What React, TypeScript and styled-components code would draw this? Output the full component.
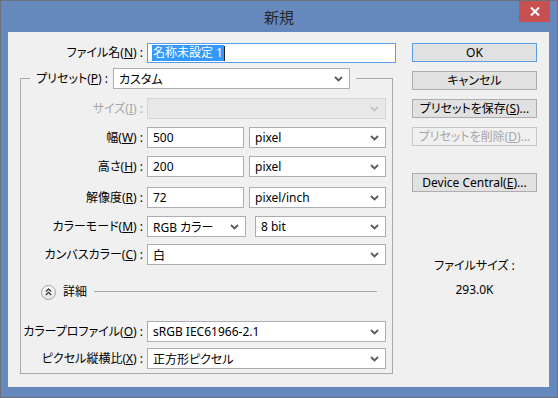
import React from "react"
import styled, { createGlobalStyle } from "styled-components"

const GlobalStyle = createGlobalStyle`
  html, body {
    margin: 0;
    padding: 0;
    background: #6689bd;
  }
  body {
    font-family: "Noto Sans", "Noto Sans CJK JP", sans-serif;
    font-size: 12px;
    color: #000;
    font-feature-settings: "palt";
  }
`

const Window = styled.div`
  position: relative;
  width: 558px;
  height: 398px;
  box-sizing: border-box;
  border: 1px solid #6a717c;
  background: #6689bd;
  display: flex;
  flex-direction: column;
`

const TitleBar = styled.div`
  height: 31px;
  display: flex;
  align-items: center;
  justify-content: center;
  font-family: "Noto Sans CJK JP", sans-serif;
  font-size: 15px;
  color: #262626;
`

const CloseButton = styled.div`
  position: absolute;
  top: 0;
  right: 7px;
  width: 31px;
  height: 21px;
  background: #c75050;
  display: flex;
  align-items: center;
  justify-content: center;
`

const Content = styled.div`
  flex: 1;
  margin: 0 8px 10px 7px;
  background: #f0f0f0;
  display: flex;
  padding-top: 11px;
`

const LeftColumn = styled.div`
  width: 388px;
  display: flex;
  flex-direction: column;
`

const RightColumn = styled.div`
  width: 125px;
  margin-left: 16px;
  display: flex;
  flex-direction: column;
`

const Row = styled.div<{ $top?: number }>`
  display: flex;
  align-items: center;
  margin-top: ${(p) => p.$top ?? 0}px;
`

const Label = styled.div<{ $width: number; $disabled?: boolean }>`
  width: ${(p) => p.$width}px;
  margin-right: 4px;
  text-align: right;
  white-space: nowrap;
  color: ${(p) => (p.$disabled ? "#a6a6a6" : "#000")};
  line-height: 16px;
`

const TextBox = styled.div<{ $width: number; $focused?: boolean }>`
  width: ${(p) => p.$width}px;
  height: ${(p) => (p.$focused ? 20 : 21)}px;
  box-sizing: border-box;
  border: 1px solid ${(p) => (p.$focused ? "#5a9de0" : "#abadb3")};
  background: #fff;
  display: flex;
  align-items: center;
  padding-left: ${(p) => (p.$focused ? 4 : 5)}px;
  font-size: 12px;
  white-space: nowrap;
`

const Selected = styled.span`
  background: #3399ff;
  color: #fff;
  line-height: 16px;
  padding: 0 1px;
`

const Caret = styled.span`
  display: inline-block;
  width: 1px;
  height: 15px;
  background: #222;
`

const Dropdown = styled.div<{ $width: number; $disabled?: boolean; $gap?: number }>`
  width: ${(p) => p.$width}px;
  height: 21px;
  margin-left: ${(p) => p.$gap ?? 0}px;
  box-sizing: border-box;
  border: 1px solid ${(p) => (p.$disabled ? "#d5d5d5" : "#abadb3")};
  background: ${(p) => (p.$disabled ? "#e8e8e8" : "#fff")};
  display: flex;
  align-items: center;
  justify-content: space-between;
  padding: 0 6px 0 5px;
  font-size: 12px;
  white-space: nowrap;
  color: ${(p) => (p.$disabled ? "#bfbfbf" : "#000")};
`

const Group = styled.fieldset`
  margin: 5px 0 0 12px;
  width: 373px;
  box-sizing: border-box;
  border: 1px solid #a8a8a8;
  padding: 9px 6px 4px 0;
  min-width: 0;
`

const Legend = styled.legend`
  margin-left: 9px;
  padding: 0 6px 0 0;
`

const LegendInner = styled.div`
  display: flex;
  align-items: center;
`

const DetailRow = styled.div`
  display: flex;
  align-items: center;
  height: 16px;
  margin-top: 19px;
`

const ToggleCircle = styled.div`
  width: 15px;
  height: 15px;
  margin-left: 20px;
  box-sizing: border-box;
  border-radius: 50%;
  border: 1px solid #a0a0a0;
  background: linear-gradient(#ffffff, #e6e6e6);
  display: flex;
  align-items: center;
  justify-content: center;
`

const DetailText = styled.span`
  margin-left: 7px;
  line-height: 16px;
`

const DetailLine = styled.div`
  flex: 1;
  height: 0;
  border-top: 1px solid #a8a8a8;
  margin: 0 9px 1px 7px;
`

const Button = styled.div<{ $top?: number; $default?: boolean; $disabled?: boolean }>`
  height: 19px;
  margin-top: ${(p) => p.$top ?? 0}px;
  box-sizing: border-box;
  border: 1px solid
    ${(p) => (p.$default ? "#5a9de0" : p.$disabled ? "#c6c6c6" : "#adadad")};
  background: ${(p) => (p.$disabled ? "#f0f0f0" : "#e1e1e1")};
  color: ${(p) => (p.$disabled ? "#a6a6a6" : "#000")};
  display: flex;
  align-items: center;
  justify-content: center;
  white-space: nowrap;
  line-height: 16px;
`

const FileSize = styled.div<{ $top?: number }>`
  margin-top: ${(p) => p.$top ?? 0}px;
  text-align: center;
  line-height: 16px;
`

const Chevron = ({ disabled }: { disabled?: boolean }) => (
  <svg width="9" height="6" viewBox="0 0 9 6">
    <polyline
      points="1,1 4.5,4.5 8,1"
      fill="none"
      stroke={disabled ? "#c4c4c4" : "#5a5a5a"}
      strokeWidth="1.8"
    />
  </svg>
)

const Select = ({
  width,
  value,
  disabled,
  gap,
}: {
  width: number
  value?: string
  disabled?: boolean
  gap?: number
}) => (
  <Dropdown $width={width} $disabled={disabled} $gap={gap}>
    <span>{value}</span>
    <Chevron disabled={disabled} />
  </Dropdown>
)

const Key = ({ k }: { k: string }) => (
  <>
    (<u>{k}</u>)
  </>
)

export default function App() {
  return (
    <>
      <GlobalStyle />
      <Window>
        <TitleBar>新規</TitleBar>
        <CloseButton>
          <svg width="10" height="9" viewBox="0 0 10 9">
            <path d="M1 0.5 L9 8.5 M9 0.5 L1 8.5" stroke="#fff" strokeWidth="2" />
          </svg>
        </CloseButton>
        <Content>
          <LeftColumn>
            <Row>
              <Label $width={135}>
                ファイル名<Key k="N" /> :
              </Label>
              <TextBox $width={249} $focused>
                <Selected>名称未設定 1</Selected>
                <Caret />
              </TextBox>
            </Row>
            <Group>
              <Legend>
                <LegendInner>
                  <Label $width={78} style={{ marginRight: 5 }}>
                    プリセット<Key k="P" /> :
                  </Label>
                  <Select width={237} value="カスタム" />
                </LegendInner>
              </Legend>
              <Row>
                <Label $width={122} $disabled>
                  サイズ<Key k="I" /> :
                </Label>
                <Select width={239} disabled />
              </Row>
              <Row $top={8}>
                <Label $width={122}>
                  幅<Key k="W" /> :
                </Label>
                <TextBox $width={97}>500</TextBox>
                <Select width={137} value="pixel" gap={5} />
              </Row>
              <Row $top={8}>
                <Label $width={122}>
                  高さ<Key k="H" /> :
                </Label>
                <TextBox $width={97}>200</TextBox>
                <Select width={137} value="pixel" gap={5} />
              </Row>
              <Row $top={10}>
                <Label $width={122}>
                  解像度<Key k="R" /> :
                </Label>
                <TextBox $width={97}>72</TextBox>
                <Select width={137} value="pixel/inch" gap={5} />
              </Row>
              <Row $top={8}>
                <Label $width={122}>
                  カラーモード<Key k="M" /> :
                </Label>
                <Select width={99} value="RGB カラー" />
                <Select width={131} value="8 bit" gap={9} />
              </Row>
              <Row $top={7}>
                <Label $width={122}>
                  カンバスカラー<Key k="C" /> :
                </Label>
                <Select width={239} value="白" />
              </Row>
              <DetailRow>
                <ToggleCircle>
                  <svg width="7" height="8" viewBox="0 0 7 8">
                    <polyline points="0.8,3.6 3.5,1 6.2,3.6" fill="none" stroke="#333" strokeWidth="1.3" />
                    <polyline points="0.8,7 3.5,4.4 6.2,7" fill="none" stroke="#333" strokeWidth="1.3" />
                  </svg>
                </ToggleCircle>
                <DetailText>詳細</DetailText>
                <DetailLine />
              </DetailRow>
              <Row $top={21}>
                <Label $width={122}>
                  カラープロファイル<Key k="O" /> :
                </Label>
                <Select width={239} value="sRGB IEC61966-2.1" />
              </Row>
              <Row $top={6}>
                <Label $width={122}>
                  ピクセル縦横比<Key k="X" /> :
                </Label>
                <Select width={239} value="正方形ピクセル" />
              </Row>
            </Group>
          </LeftColumn>
          <RightColumn>
            <Button $default>OK</Button>
            <Button $top={9}>キャンセル</Button>
            <Button $top={9}>
              プリセットを保存<Key k="S" />...
            </Button>
            <Button $top={9} $disabled>
              プリセットを削除<Key k="D" />...
            </Button>
            <Button $top={27}>
              Device Central<Key k="E" />...
            </Button>
            <FileSize $top={66}>ファイルサイズ :</FileSize>
            <FileSize $top={8}>293.0K</FileSize>
          </RightColumn>
        </Content>
      </Window>
    </>
  )
}
